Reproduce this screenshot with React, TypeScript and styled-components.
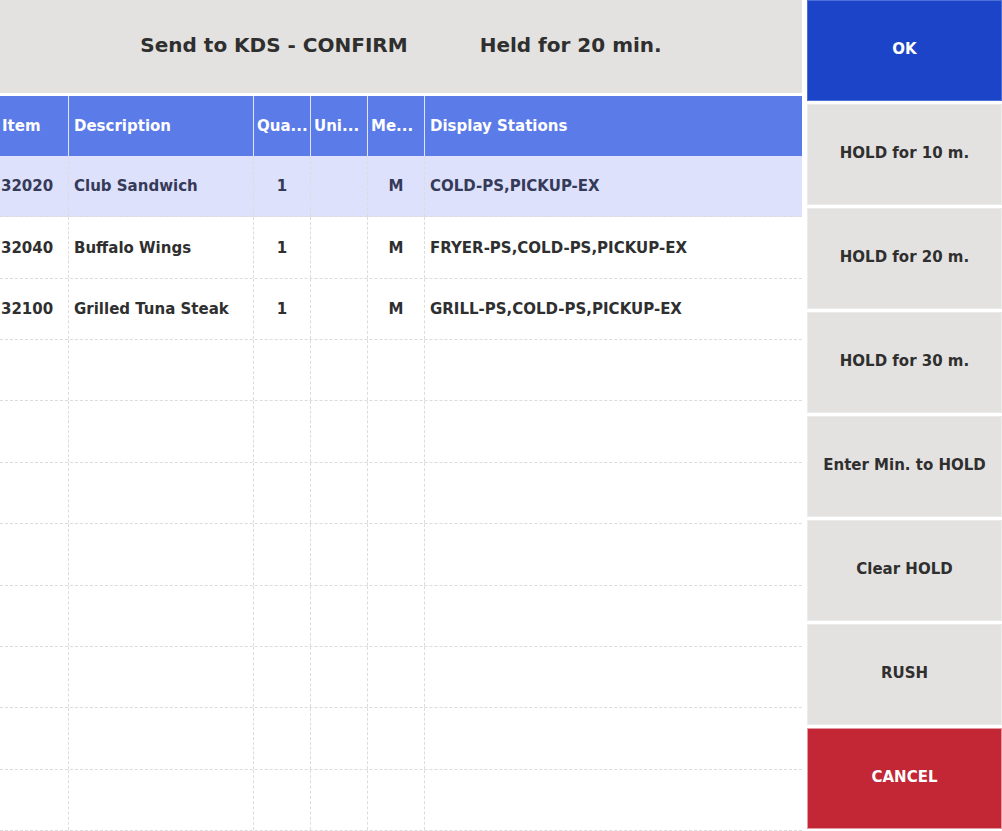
import styled, { createGlobalStyle } from "styled-components";

const GlobalStyle = createGlobalStyle`
  html, body {
    margin: 0;
    padding: 0;
    background: #ffffff;
    font-family: "DejaVu Sans", Verdana, sans-serif;
  }
  * {
    box-sizing: border-box;
  }
`;

const columns = [
  { key: "item", title: "Item", align: "left" },
  { key: "desc", title: "Description", align: "left" },
  { key: "qty", title: "Qua...", align: "center" },
  { key: "unit", title: "Uni...", align: "center" },
  { key: "meal", title: "Me...", align: "center" },
  { key: "stations", title: "Display Stations", align: "left" },
];

const rows = [
  { item: "32020", desc: "Club Sandwich", qty: "1", unit: "", meal: "M", stations: "COLD-PS,PICKUP-EX" },
  { item: "32040", desc: "Buffalo Wings", qty: "1", unit: "", meal: "M", stations: "FRYER-PS,COLD-PS,PICKUP-EX" },
  { item: "32100", desc: "Grilled Tuna Steak", qty: "1", unit: "", meal: "M", stations: "GRILL-PS,COLD-PS,PICKUP-EX" },
];

const buttons = [
  { label: "OK", kind: "ok" },
  { label: "HOLD for 10 m.", kind: "plain" },
  { label: "HOLD for 20 m.", kind: "plain" },
  { label: "HOLD for 30 m.", kind: "plain" },
  { label: "Enter Min. to HOLD", kind: "plain" },
  { label: "Clear HOLD", kind: "plain" },
  { label: "RUSH", kind: "plain" },
  { label: "CANCEL", kind: "cancel" },
];

const TOTAL_ROWS = 11;

export default function App() {
  const filler = Array.from({ length: TOTAL_ROWS - rows.length });

  return (
    <>
      <GlobalStyle />
      <Page>
        <Main>
          <TitleBar>
            <Title>Send to KDS - CONFIRM</Title>
            <Title>Held for 20 min.</Title>
          </TitleBar>
          <Table>
            <HeadRow>
              {columns.map((c) => (
                <HeadCell key={c.key}>{c.title}</HeadCell>
              ))}
            </HeadRow>
            <Body>
              {rows.map((r, i) => (
                <Row key={r.item} $selected={i === 0}>
                  {columns.map((c) => (
                    <Cell key={c.key} $align={c.align}>
                      {(r as any)[c.key]}
                    </Cell>
                  ))}
                </Row>
              ))}
              {filler.map((_, i) => (
                <Row key={"e" + i}>
                  {columns.map((c) => (
                    <Cell key={c.key} $align={c.align} />
                  ))}
                </Row>
              ))}
            </Body>
          </Table>
        </Main>
        <Side>
          {buttons.map((b) => (
            <ActionButton key={b.label} $kind={b.kind}>
              {b.label}
            </ActionButton>
          ))}
        </Side>
      </Page>
    </>
  );
}

const Page = styled.div`
  display: flex;
  gap: 5px;
  width: 1002px;
  height: 831px;
  overflow: hidden;
`;

const Main = styled.div`
  flex: 0 0 802px;
  display: flex;
  flex-direction: column;
  gap: 3px;
`;

const TitleBar = styled.div`
  height: 93px;
  flex: 0 0 93px;
  background: #e3e2e0;
  display: flex;
  justify-content: center;
  align-items: center;
  gap: 72px;
  padding-bottom: 4px;
`;

const Title = styled.div`
  font-size: 20px;
  font-weight: bold;
  color: #2f2f2f;
`;

const Table = styled.div`
  flex: 1;
  display: flex;
  flex-direction: column;
`;

const grid = `
  display: grid;
  grid-template-columns: 68px 185px 57px 57px 57px 1fr;
`;

const HeadRow = styled.div`
  ${grid};
  height: 60px;
  background: #5b7be8;
`;

const HeadCell = styled.div`
  display: flex;
  align-items: center;
  padding-left: 3px;
  color: #ffffff;
  font-size: 15px;
  font-weight: bold;
  border-left: 1px solid #dfe4f7;
  white-space: nowrap;
  overflow: hidden;

  &:first-child {
    border-left: none;
    padding-left: 2px;
  }

  &:nth-child(2),
  &:nth-child(6) {
    padding-left: 5px;
  }
`;

const Body = styled.div`
  flex: 1;
  display: grid;
  grid-template-rows: repeat(${TOTAL_ROWS}, 1fr);
`;

const Row = styled.div<{ $selected?: boolean }>`
  ${grid};
  background: ${(p) => (p.$selected ? "#dde1fb" : "#ffffff")};
  color: ${(p) => (p.$selected ? "#353a58" : "#2f2f2f")};
  border-bottom: 1px dashed #dcdcdc;
`;

const Cell = styled.div<{ $align: string }>`
  display: flex;
  align-items: center;
  justify-content: ${(p) => (p.$align === "center" ? "center" : "flex-start")};
  padding-left: ${(p) => (p.$align === "center" ? "0" : "5px")};
  font-size: 15px;
  font-weight: bold;
  border-left: 1px dashed #dcdcdc;
  white-space: nowrap;

  &:first-child {
    border-left: none;
    padding-left: 1px;
  }
`;

const buttonColors: Record<string, { bg: string; fg: string; edge: string }> = {
  ok: { bg: "#1c44c8", fg: "#ffffff", edge: "#4f6fd8" },
  cancel: { bg: "#c32635", fg: "#ffffff", edge: "#e39aa2" },
  plain: { bg: "#e3e2e0", fg: "#2f2f2f", edge: "#ececea" },
};

const Side = styled.div`
  flex: 1;
  display: flex;
  flex-direction: column;
  gap: 3px;
  padding-bottom: 2px;
`;

const ActionButton = styled.div<{ $kind: string }>`
  flex: 1;
  display: flex;
  justify-content: center;
  align-items: center;
  padding-bottom: 3px;
  background: ${(p) => buttonColors[p.$kind].bg};
  color: ${(p) => buttonColors[p.$kind].fg};
  border: 1px solid ${(p) => buttonColors[p.$kind].edge};
  font-size: 15px;
  font-weight: bold;
  cursor: pointer;
`;
